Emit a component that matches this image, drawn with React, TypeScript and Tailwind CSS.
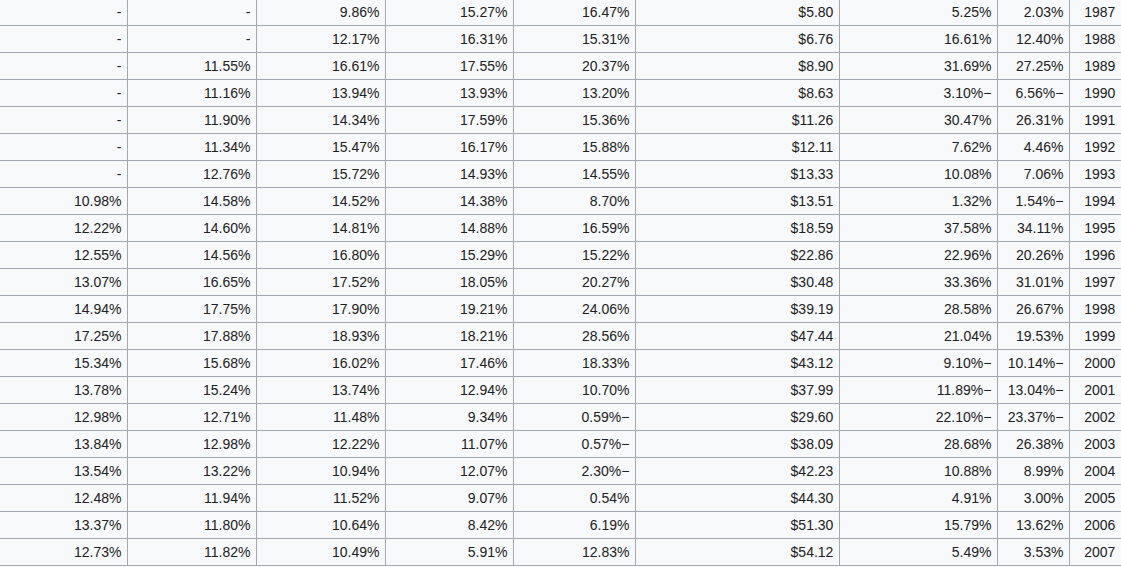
const rows: string[][] = [
  ['-', '-', '9.86%', '15.27%', '16.47%', '$5.80', '5.25%', '2.03%', '1987'],
  ['-', '-', '12.17%', '16.31%', '15.31%', '$6.76', '16.61%', '12.40%', '1988'],
  ['-', '11.55%', '16.61%', '17.55%', '20.37%', '$8.90', '31.69%', '27.25%', '1989'],
  ['-', '11.16%', '13.94%', '13.93%', '13.20%', '$8.63', '3.10%−', '6.56%−', '1990'],
  ['-', '11.90%', '14.34%', '17.59%', '15.36%', '$11.26', '30.47%', '26.31%', '1991'],
  ['-', '11.34%', '15.47%', '16.17%', '15.88%', '$12.11', '7.62%', '4.46%', '1992'],
  ['-', '12.76%', '15.72%', '14.93%', '14.55%', '$13.33', '10.08%', '7.06%', '1993'],
  ['10.98%', '14.58%', '14.52%', '14.38%', '8.70%', '$13.51', '1.32%', '1.54%−', '1994'],
  ['12.22%', '14.60%', '14.81%', '14.88%', '16.59%', '$18.59', '37.58%', '34.11%', '1995'],
  ['12.55%', '14.56%', '16.80%', '15.29%', '15.22%', '$22.86', '22.96%', '20.26%', '1996'],
  ['13.07%', '16.65%', '17.52%', '18.05%', '20.27%', '$30.48', '33.36%', '31.01%', '1997'],
  ['14.94%', '17.75%', '17.90%', '19.21%', '24.06%', '$39.19', '28.58%', '26.67%', '1998'],
  ['17.25%', '17.88%', '18.93%', '18.21%', '28.56%', '$47.44', '21.04%', '19.53%', '1999'],
  ['15.34%', '15.68%', '16.02%', '17.46%', '18.33%', '$43.12', '9.10%−', '10.14%−', '2000'],
  ['13.78%', '15.24%', '13.74%', '12.94%', '10.70%', '$37.99', '11.89%−', '13.04%−', '2001'],
  ['12.98%', '12.71%', '11.48%', '9.34%', '0.59%−', '$29.60', '22.10%−', '23.37%−', '2002'],
  ['13.84%', '12.98%', '12.22%', '11.07%', '0.57%−', '$38.09', '28.68%', '26.38%', '2003'],
  ['13.54%', '13.22%', '10.94%', '12.07%', '2.30%−', '$42.23', '10.88%', '8.99%', '2004'],
  ['12.48%', '11.94%', '11.52%', '9.07%', '0.54%', '$44.30', '4.91%', '3.00%', '2005'],
  ['13.37%', '11.80%', '10.64%', '8.42%', '6.19%', '$51.30', '15.79%', '13.62%', '2006'],
  ['12.73%', '11.82%', '10.49%', '5.91%', '12.83%', '$54.12', '5.49%', '3.53%', '2007'],
];

export default function App() {
  return (
    <div className="h-screen w-full overflow-hidden bg-[#f8f9fa] text-[14px] text-[#202122] font-['Liberation_Sans',Arial,sans-serif]">
      {/* yearly returns table, top edge scrolled slightly out of view */}
      <div className="-mt-px grid grid-cols-[127px_128px_128px_127px_121px_203px_157px_71px_1fr] auto-rows-[26px] gap-px bg-[#a2a9b1] pb-px">
        {rows.map((row) =>
          row.map((cell, i) => (
            <div key={row[8] + '-' + i} className="flex items-center justify-end bg-[#f8f9fa] pr-[5.6px] leading-none whitespace-nowrap">
              {cell}
            </div>
          ))
        )}
      </div>
    </div>
  );
}
